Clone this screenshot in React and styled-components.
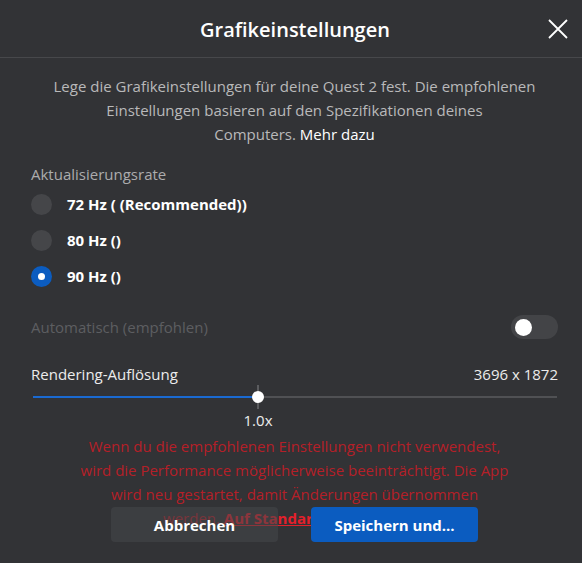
import React from "react";
import styled, { createGlobalStyle } from "styled-components";

const Global = createGlobalStyle`
  html, body { margin: 0; padding: 0; background: #323336; }
  body { font-family: "Open Sans", "Noto Sans", sans-serif; }
  * { box-sizing: border-box; }
`;

const Dialog = styled.div`
  width: 582px;
  height: 563px;
  background: #323336;
  display: flex;
  flex-direction: column;
  overflow: hidden;
`;

const Header = styled.div`
  height: 58px;
  display: grid;
  grid-template-columns: 56px 1fr 48px;
  align-items: center;
  border-bottom: 1px solid #47484b;
`;

const Title = styled.h1`
  grid-column: 2;
  margin: 0;
  text-align: center;
  font-size: 20px;
  font-weight: 600;
  color: #ffffff;
  padding-top: 2px;
`;

const CloseButton = styled.button`
  grid-column: 3;
  background: none;
  border: none;
  padding: 0;
  width: 48px;
  height: 48px;
  display: flex;
  align-items: center;
  justify-content: center;
  cursor: pointer;
`;

const Body = styled.div`
  padding: 0 24px 0 31px;
  display: flex;
  flex-direction: column;
`;

const Intro = styled.p`
  margin: 16px 0 0;
  text-align: center;
  font-size: 15px;
  line-height: 24px;
  color: #b9b9ba;
`;

const Link = styled.a`
  color: #ffffff;
  text-decoration: none;
`;

const SectionLabel = styled.div`
  margin: 17px 0 1px;
  font-size: 15px;
  line-height: 22px;
  color: #acacad;
`;

const RadioRow = styled.label`
  height: 36px;
  display: flex;
  align-items: center;
  gap: 15px;
  font-size: 15px;
  font-weight: 700;
  color: #ffffff;
`;

const RadioDot = styled.span`
  width: 21px;
  height: 21px;
  border-radius: 50%;
  background: ${(p) => (p.$checked ? "#0b5cc0" : "#454649")};
  display: flex;
  align-items: center;
  justify-content: center;
  &::after {
    content: "";
    width: 7px;
    height: 7px;
    border-radius: 50%;
    background: #ffffff;
    display: ${(p) => (p.$checked ? "block" : "none")};
  }
`;

const ToggleRow = styled.div`
  margin-top: 15px;
  height: 36px;
  display: flex;
  align-items: center;
  justify-content: space-between;
`;

const DimLabel = styled.span`
  font-size: 15px;
  color: #5d5e61;
`;

const Toggle = styled.span`
  width: 47px;
  height: 24px;
  border-radius: 12px;
  background: #434447;
  display: flex;
  align-items: center;
  padding-left: 4px;
  &::after {
    content: "";
    width: 17px;
    height: 17px;
    border-radius: 50%;
    background: #ffffff;
  }
`;

const ResRow = styled.div`
  margin-top: 18px;
  display: flex;
  justify-content: space-between;
  font-size: 15px;
  line-height: 22px;
  color: #ececec;
`;

const Slider = styled.div`
  margin: 0 1px 0 2px;
  height: 24px;
  display: flex;
  align-items: center;
`;

const TrackFill = styled.div`
  height: 2px;
  background: #1a6ad2;
`;

const Thumb = styled.div`
  width: 0;
  align-self: stretch;
  display: flex;
  align-items: center;
  justify-content: center;
  position: relative;
  &::before {
    content: "";
    position: absolute;
    left: -1px;
    top: 0;
    bottom: 0;
    width: 2px;
    background: #5b5c5f;
  }
  &::after {
    content: "";
    position: absolute;
    width: 12px;
    height: 12px;
    border-radius: 50%;
    background: #ffffff;
  }
`;

const TrackRest = styled.div`
  flex: 1;
  height: 2px;
  background: #505154;
`;

const TickLabel = styled.div`
  margin-left: ${(p) => p.$x}px;
  width: 0;
  display: flex;
  justify-content: center;
  white-space: nowrap;
  font-size: 15px;
  line-height: 22px;
  color: #ececec;
`;

const Warning = styled.p`
  margin: 3px 0 0;
  height: 73px;
  overflow: visible;
  text-align: center;
  font-size: 15px;
  line-height: 24px;
  color: #b51f28;
`;

const ResetLink = styled.a`
  color: #e3202b;
  font-weight: 700;
  text-decoration: underline;
`;

const Footer = styled.div`
  position: relative;
  z-index: 1;
  display: flex;
  justify-content: center;
  gap: 33px;
`;

const Button = styled.button`
  width: 167px;
  height: 35px;
  border: none;
  border-radius: 4px;
  font-family: inherit;
  font-size: 15px;
  font-weight: 700;
  color: #ffffff;
  background: ${(p) => (p.$primary ? "#0b5cc0" : "rgba(70, 71, 74, 0.55)")};
`;

const rates = [
  { label: "72 Hz ( (Recommended))", checked: false },
  { label: "80 Hz ()", checked: false },
  { label: "90 Hz ()", checked: true },
];

export default function App() {
  const fill = 225;
  return (
    <>
      <Global />
      <Dialog>
        <Header>
          <Title>Grafikeinstellungen</Title>
          <CloseButton aria-label="Schließen">
            <svg width="20" height="20" viewBox="0 0 20 20">
              <path d="M1 1 L19 19 M19 1 L1 19" stroke="#ffffff" strokeWidth="1.8" fill="none" />
            </svg>
          </CloseButton>
        </Header>
        <Body>
          <Intro>
            Lege die Grafikeinstellungen für deine Quest 2 fest. Die empfohlenen
            <br />
            Einstellungen basieren auf den Spezifikationen deines
            <br />
            Computers. <Link>Mehr dazu</Link>
          </Intro>
          <SectionLabel>Aktualisierungsrate</SectionLabel>
          {rates.map((r) => (
            <RadioRow key={r.label}>
              <RadioDot $checked={r.checked} />
              {r.label}
            </RadioRow>
          ))}
          <ToggleRow>
            <DimLabel>Automatisch (empfohlen)</DimLabel>
            <Toggle />
          </ToggleRow>
          <ResRow>
            <span>Rendering-Auflösung</span>
            <span>3696 x 1872</span>
          </ResRow>
          <Slider>
            <TrackFill style={{ width: fill }} />
            <Thumb />
            <TrackRest />
          </Slider>
          <TickLabel $x={fill + 2}>1.0x</TickLabel>
          <Warning>
            Wenn du die empfohlenen Einstellungen nicht verwendest,
            <br />
            wird die Performance möglicherweise beeinträchtigt. Die App
            <br />
            wird neu gestartet, damit Änderungen übernommen
            <br />
            werden. <ResetLink>Auf Standard zurücksetzen</ResetLink>
          </Warning>
          <Footer>
            <Button>Abbrechen</Button>
            <Button $primary>Speichern und...</Button>
          </Footer>
        </Body>
      </Dialog>
    </>
  );
}
